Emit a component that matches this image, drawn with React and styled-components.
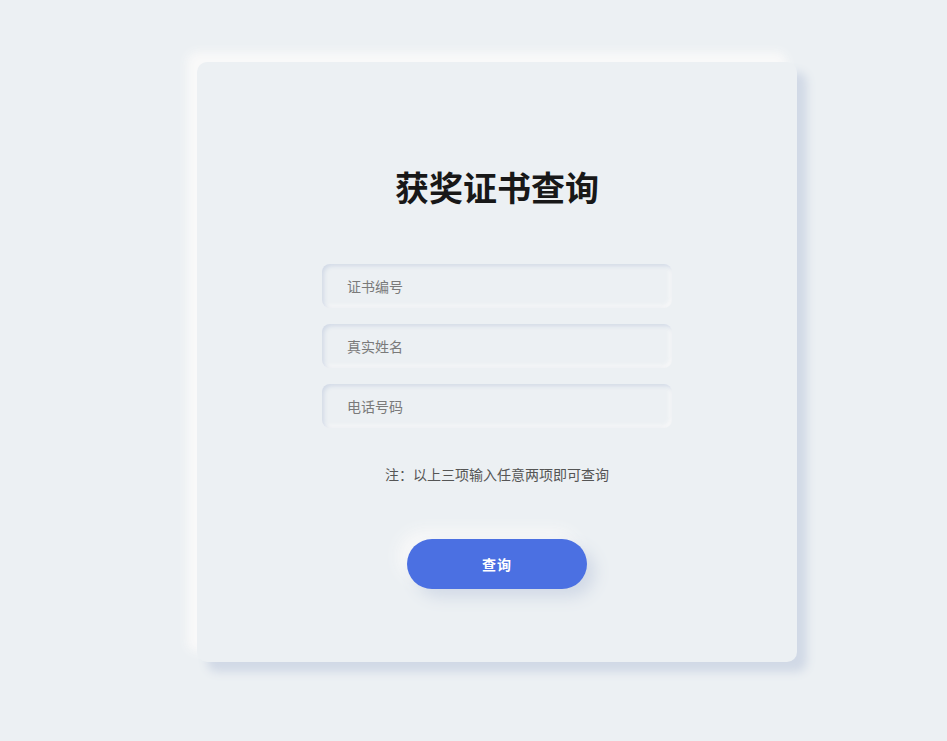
import React from "react";
import styled, { createGlobalStyle } from "styled-components";

const Global = createGlobalStyle`
  html, body { margin: 0; padding: 0; background: #ecf0f3; }
  body { font-family: "Noto Sans CJK SC", "Noto Sans", sans-serif; }
  * { box-sizing: border-box; }
`;

const Page = styled.div`
  min-height: 741px;
  padding: 62px 150px 0 197px;
  display: flex;
  align-items: flex-start;
`;

const Card = styled.div`
  width: 600px;
  height: 600px;
  border-radius: 10px;
  background: #ecf0f3;
  box-shadow: 10px 10px 10px #d1d9e6, -10px -10px 10px #f9f9f9;
  display: flex;
  flex-direction: column;
  align-items: center;
  padding-top: 100px;
`;

const Title = styled.h1`
  margin: 0;
  font-size: 34px;
  line-height: 50px;
  font-weight: 700;
  color: #181818;
  letter-spacing: 0;
`;

const Form = styled.div`
  margin-top: 52px;
  display: flex;
  flex-direction: column;
  gap: 16px;
`;

const Input = styled.input`
  width: 350px;
  height: 44px;
  border: none;
  outline: none;
  border-radius: 8px;
  background: #ecf0f3;
  box-shadow: inset 2px 2px 4px #d1d9e6, inset -2px -2px 4px #f9f9f9;
  padding: 0 25px;
  font-family: inherit;
  font-size: 14px;
  color: #333;
  &::placeholder { color: #7a7a7a; }
`;

const Note = styled.p`
  margin: 36px 0 0;
  font-size: 14px;
  line-height: 20px;
  color: #555;
`;

const Button = styled.button`
  margin-top: 55px;
  width: 180px;
  height: 50px;
  border: none;
  border-radius: 25px;
  background: #4b70e2;
  color: #fff;
  font-family: inherit;
  font-size: 14px;
  font-weight: 700;
  letter-spacing: 1px;
  box-shadow: 8px 8px 16px #d1d9e6, -8px -8px 16px #f9f9f9;
  cursor: pointer;
`;

export default function App() {
  return (
    <>
      <Global />
      <Page>
        <Card>
          <Title>获奖证书查询</Title>
          <Form>
            <Input placeholder="证书编号" />
            <Input placeholder="真实姓名" />
            <Input placeholder="电话号码" />
          </Form>
          <Note>注：以上三项输入任意两项即可查询</Note>
          <Button>查询</Button>
        </Card>
      </Page>
    </>
  );
}
